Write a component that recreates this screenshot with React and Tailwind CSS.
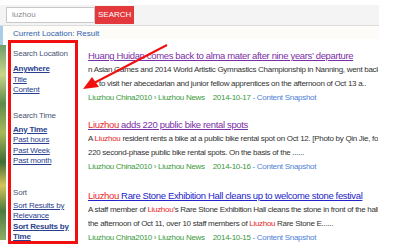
import React from 'react'

const results = [
  {
    title: [{ t: 'Huang Huidan comes back to alma mater after nine years’ departure' }],
    color: 'text-[#7b2fa6]',
    lines: [
      [{ t: 'n Asian Games and 2014 World Artistic Gymnastics Championship in Nanning, went back to her school' }],
      [{ t: 'to visit her abecedarian and junior fellow apprentices on the afternoon of Oct 13 a..' }],
    ],
    indent: true,
    date: '2014-10-17',
    gap: 'mt-0',
  },
  {
    title: [{ t: 'Liuzhou', hl: true }, { t: ' adds 220 public bike rental spots' }],
    color: 'text-[#7b2fa6]',
    lines: [
      [{ t: 'A ' }, { t: 'Liuzhou', hl: true }, { t: ' resident rents a bike at a public bike rental spot on Oct 12. [Photo by Qin Jie, for' }],
      [{ t: '220 second-phase public bike rental spots. On the basis of the ......' }],
    ],
    date: '2014-10-16',
    gap: 'mt-[14px]',
  },
  {
    title: [{ t: 'Liuzhou', hl: true }, { t: ' Rare Stone Exhibition Hall cleans up to welcome stone festival' }],
    color: 'text-[#2323c8]',
    lines: [
      [{ t: 'A staff member of ' }, { t: 'Liuzhou', hl: true }, { t: '’s Rare Stone Exhibition Hall cleans the stone in front of the hall' }],
      [{ t: 'the afternoon of Oct 11, over 10 staff members of ' }, { t: 'Liuzhou', hl: true }, { t: ' Rare Stone E......' }],
    ],
    date: '2014-10-15',
    gap: 'mt-[16px]',
  },
]

const Parts = ({ parts }) =>
  parts.map((p, i) => (
    <span key={i} className={p.hl ? 'text-[#e8262b]' : ''}>
      {p.t}
    </span>
  ))

const SideLink = ({ children, bold }) => (
  <div className={`text-[#2b3f8f] underline leading-[10.5px] ${bold ? 'font-bold' : ''}`}>{children}</div>
)

const App = () => {
  return (
    <div
      className="relative w-[399px] h-[249px] overflow-hidden bg-white"
      style={{ fontFamily: '"Liberation Sans", Arial, sans-serif' }}
    >
      {/* search bar */}
      <div className="mt-[5px] w-[379px] h-[21px] bg-[#f4f4f4] border-b border-[#dcdcdc] flex items-center pl-[6px]">
        <div className="w-[89px] h-[16px] border border-[#c8c8c8] bg-white flex items-center pl-[5px] text-[8px] text-[#8a8a8a]">
          luzhou
        </div>
        <div className="h-[18px] px-[3px] bg-[#e3393c] text-white text-[8px] flex items-center">SEARCH</div>
      </div>

      <div className="flex">
        {/* left edge strip */}
        <div className="w-[6px] flex flex-col">
          <div className="w-[3px] h-[19px] bg-[#a9cde9]" />
          <div className="w-[6px] h-[195px] bg-[linear-gradient(180deg,#6f9c6a_0%,#c9d48a_15%,#5e8a4a_30%,#a7b85a_45%,#3f6b33_60%,#d6c45a_72%,#4c7a3c_85%,#8fae6a_100%)]" />
        </div>

        <div className="flex-1 w-[373px]">
          <div className="h-[13px] pl-[7px] pt-[2px] text-[8px] text-[#2f5fae] bg-[#fdfcf9] w-[373px]">
            Current Location: Result
          </div>

          <div className="flex mt-[1px]">
            {/* sidebar */}
            <div className="ml-[2px] w-[70px] h-[204px] border-[3px] border-[#f01010] pl-[2px] pt-[6px] text-[8px] tracking-[-0.2px]">
              <div className="text-[#4a5678] leading-[10px]">Search Location</div>
              <div className="mt-[5px]">
                <SideLink bold>Anywhere</SideLink>
                <SideLink>Title</SideLink>
                <SideLink>Content</SideLink>
              </div>
              <div className="text-[#4a5678] leading-[10px] mt-[15px]">Search Time</div>
              <div className="mt-[4px]">
                <SideLink bold>Any Time</SideLink>
                <SideLink>Past hours</SideLink>
                <SideLink>Past Week</SideLink>
                <SideLink>Past month</SideLink>
              </div>
              <div className="text-[#4a5678] leading-[10px] mt-[21px]">Sort</div>
              <div className="mt-[3px]">
                <SideLink>Sort Results by</SideLink>
                <SideLink>Relevance</SideLink>
                <SideLink bold>Sort Results by</SideLink>
                <SideLink bold>Time</SideLink>
              </div>
            </div>

            {/* results */}
            <div className="ml-[10px] w-[290px] overflow-hidden pt-[9px]">
              {results.map((r, i) => (
                <div key={i} className={r.gap}>
                  <div className={`text-[9.5px] leading-[14px] underline whitespace-nowrap tracking-[-0.35px] ${r.color}`}>
                    <Parts parts={r.title} />
                  </div>
                  {r.lines.map((l, j) => (
                    <div
                      key={j}
                      className={`text-[8px] leading-[14px] text-[#333] whitespace-nowrap tracking-[-0.3px] ${r.indent && j === 1 ? 'pl-[11px]' : ''}`}
                    >
                      <Parts parts={l} />
                    </div>
                  ))}
                  <div className="text-[8px] leading-[13px] whitespace-nowrap tracking-[-0.3px]">
                    <span className="text-[#3a9a3a]">Liuzhou China2010 › Liuzhou News</span>
                    <span className="text-[#3a9a3a] ml-[8px]">{r.date}</span>
                    <span className="text-[#4f7fd6]"> - Content Snapshot</span>
                  </div>
                </div>
              ))}
            </div>
          </div>
        </div>
      </div>

      {/* annotation arrow */}
      <svg className="absolute left-0 top-0" width="399" height="249" viewBox="0 0 399 249">
        <line x1="167" y1="45" x2="94" y2="83" stroke="#f01010" strokeWidth="2" />
        <polygon points="83,89 92,77 99,87" fill="#f01010" />
      </svg>
    </div>
  )
}

export default App
